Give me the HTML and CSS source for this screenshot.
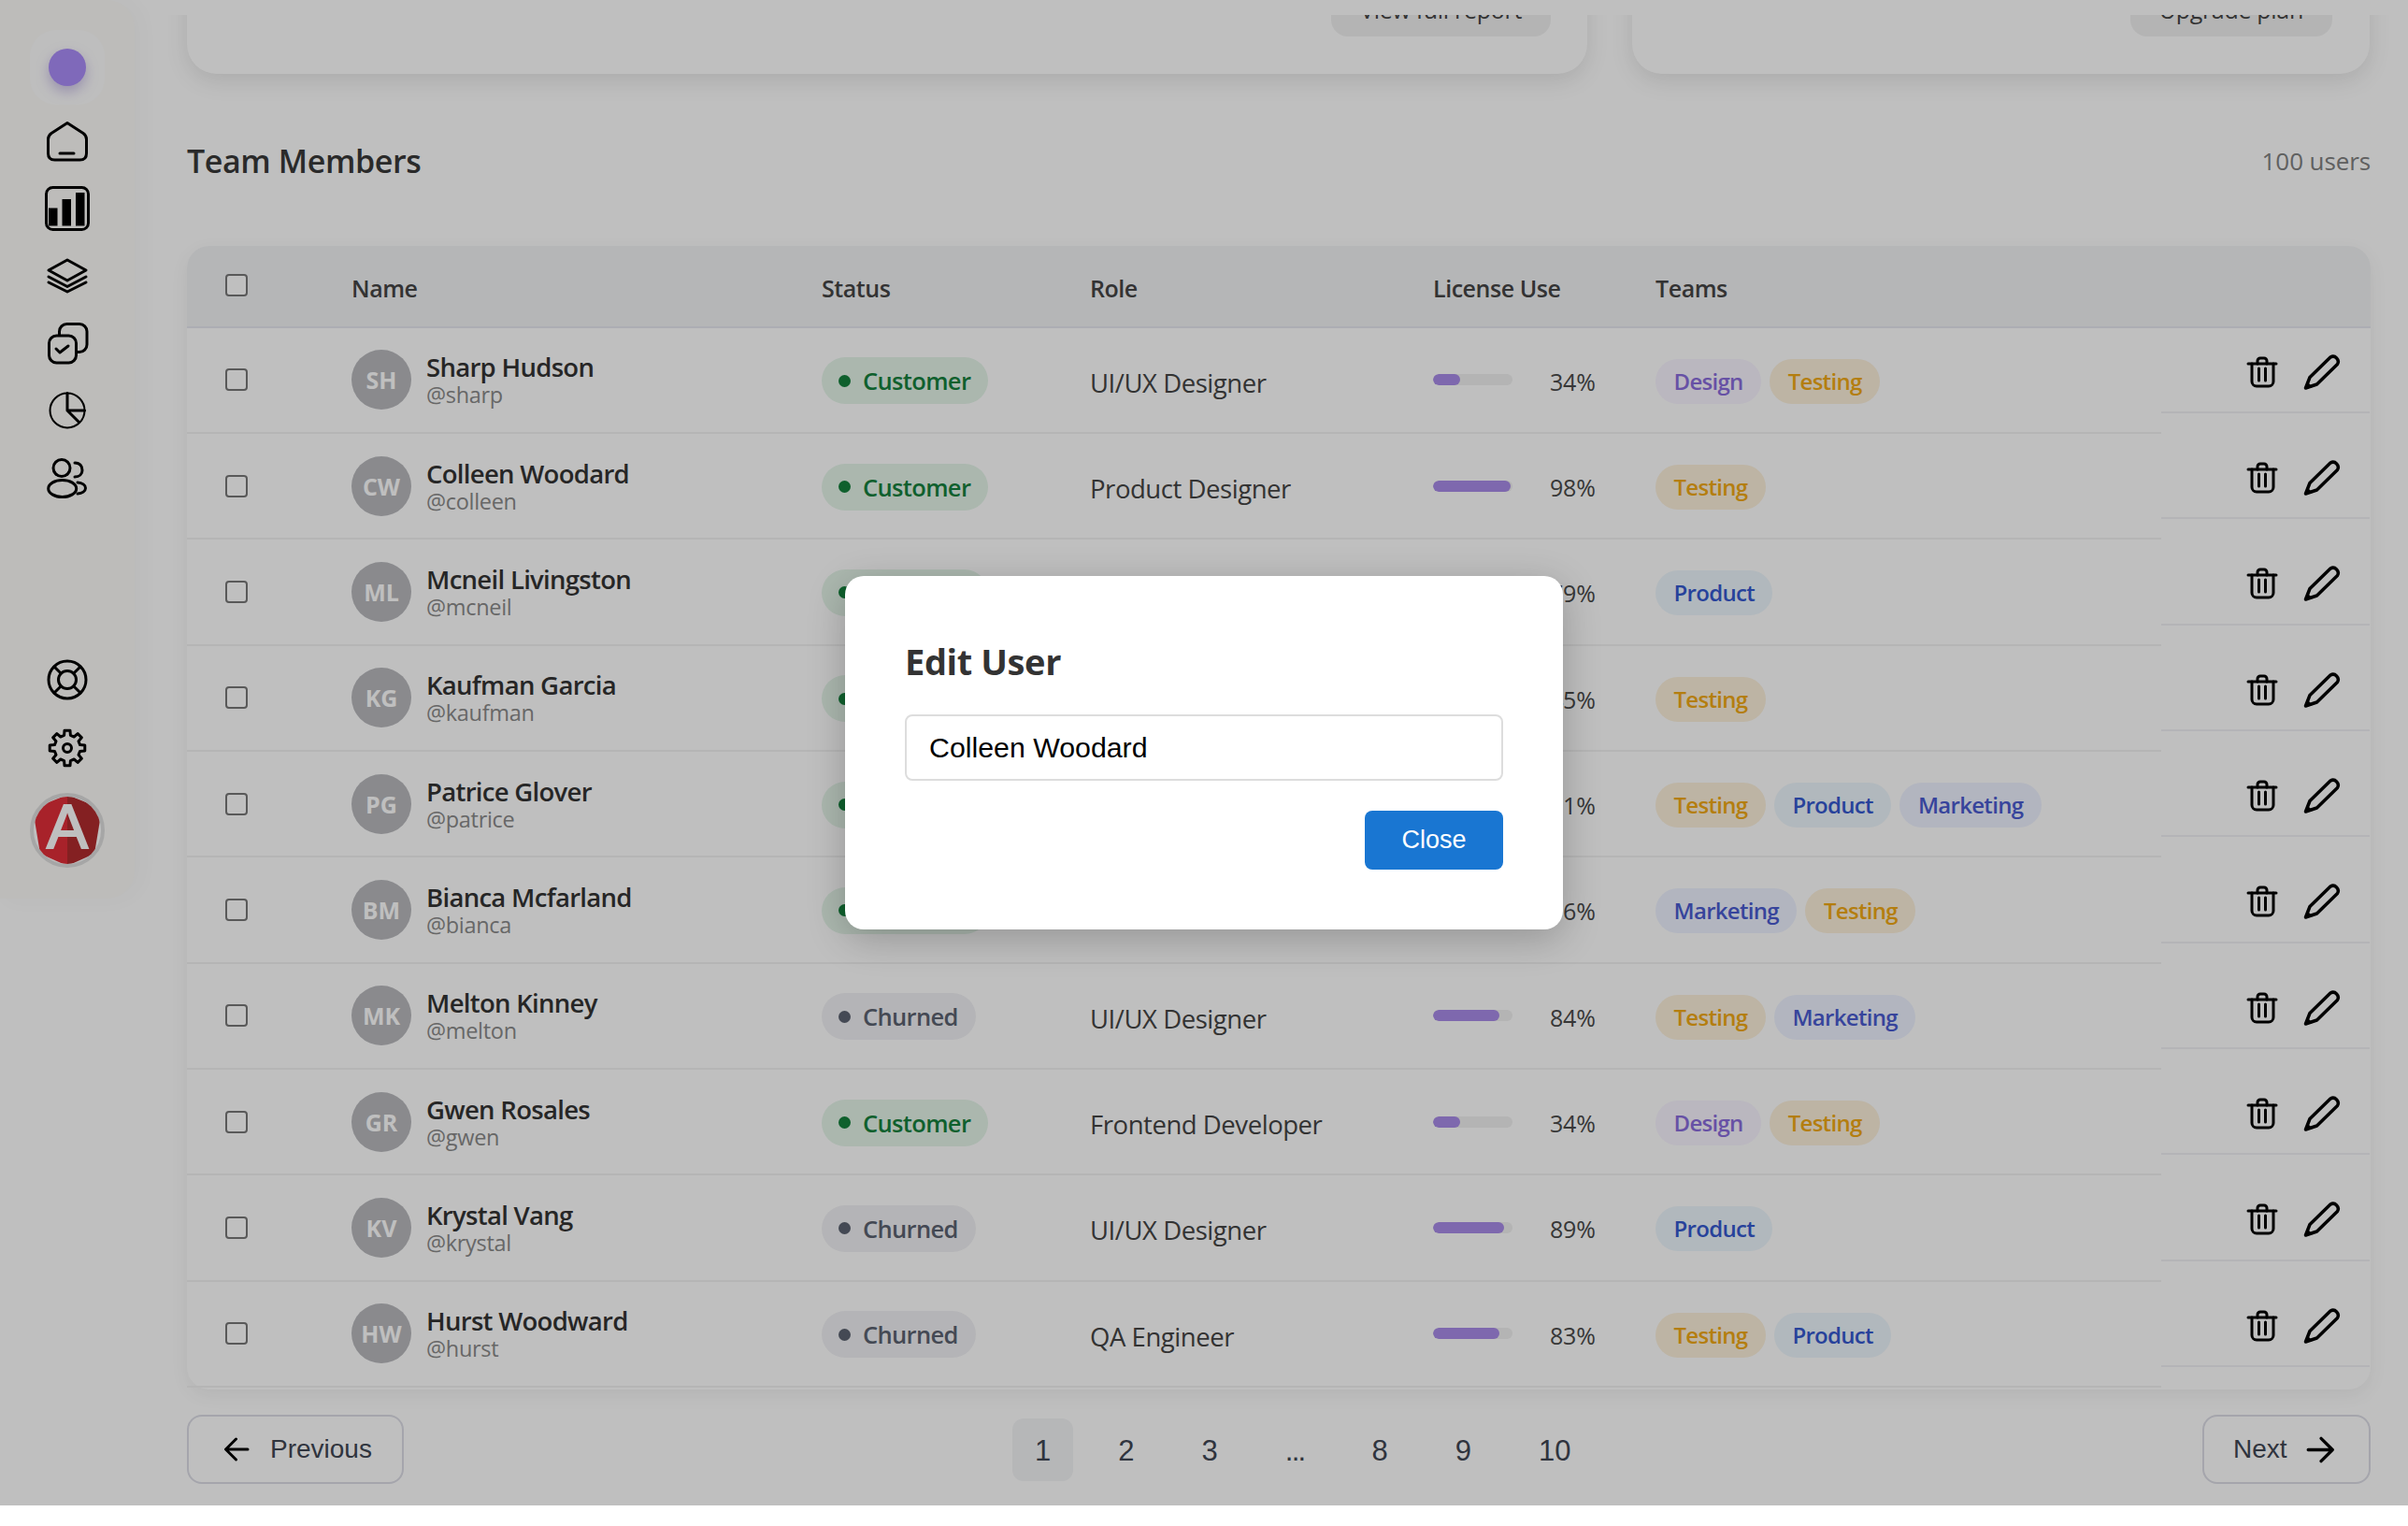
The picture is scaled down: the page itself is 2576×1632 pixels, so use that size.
FILE: index.html
```html
<!DOCTYPE html>
<html lang="en">
<head>
<meta charset="utf-8">
<title>Team Members</title>
<link rel="stylesheet" href="styles.css">
</head>
<body>
<svg class="defs" width="0" height="0" aria-hidden="true">
  <symbol id="trash" viewBox="0 0 36 36"><g class="ln"><path d="M3 9H33"/><path d="M13 9V6a3 3 0 0 1 3-3h4a3 3 0 0 1 3 3V9"/><path d="M7 9V28a5 5 0 0 0 5 5H25a5 5 0 0 0 5-5V9"/><path d="M14.500 14V27M21.500 14V27"/></g></symbol>
  <symbol id="pencil" viewBox="0 0 40 40"><g class="ln heavy"><path d="M2.500 37L7 25.500L29 4a5.500 5.500 0 0 1 7.500 7.500L14.500 33Z"/></g><path d="M2 38L4 30L10 36Z"/></symbol>
</svg>
<div class="app">
  <aside class="sidebar">
    <div class="brand"><span class="brand-dot"></span></div>
    <nav class="nav">
      <svg class="ico" viewBox="0 0 48 48"><g class="ln"><path d="M24 4.500L41 15.500Q44.500 18 44.500 22V37Q44.500 44 37.500 44H10.500Q3.500 44 3.500 37V22Q3.500 18 7 15.500Z"/><path d="M16 37H31"/></g></svg>
      <svg class="ico" viewBox="0 0 48 48"><rect class="ln" x="1.500" y="1.500" width="45" height="45" rx="7"/><rect x="4" y="23.500" width="9.500" height="19"/><rect x="18.500" y="14" width="9.500" height="28.500"/><rect x="33" y="7" width="9.500" height="35.500"/></svg>
      <svg class="ico" viewBox="0 0 48 48"><g class="ln"><path d="M24 7L44 18L24 29L4 18Z"/><path d="M4 25L24 35.500L44 25"/><path d="M4 31L24 41L44 31"/></g></svg>
      <svg class="ico" viewBox="0 0 48 48"><g class="ln"><path d="M15.500 15V11.500A8 8 0 0 1 23.500 3.500H37A8 8 0 0 1 45 11.500V25.500A8 8 0 0 1 37 33.500H33.500"/><rect x="4.500" y="16" width="29" height="29" rx="8"/><path d="M12 30L16 34L25 27"/></g></svg>
      <svg class="ico" viewBox="0 0 48 48"><g class="ln thin"><circle cx="24" cy="24" r="18.500"/></g><g class="ln"><path d="M24 5.500V24H42.500M24 24L36 36"/></g></svg>
      <svg class="ico" viewBox="0 0 48 48"><g class="ln"><circle cx="18" cy="13.500" r="9"/><ellipse cx="18.700" cy="35.500" rx="15" ry="9"/><path d="M32 8C38 8 40 12 40 16C40 20 37 23 32 23"/><path d="M35 29C40 29.500 43.500 32 43.500 35C43.500 38 40 40.500 35 41"/></g></svg>
    </nav>
    <div class="nav nav-bottom">
      <svg class="ico" viewBox="0 0 48 48"><g class="ln"><circle cx="24" cy="24" r="20"/><circle cx="24" cy="24" r="9.500"/><path d="M10 10L17.300 17.300M38 10L30.700 17.300M10 38L17.300 30.700M38 38L30.700 30.700"/></g></svg>
      <svg class="ico" viewBox="0 0 48 48"><g class="ln"><polygon points="20.610,10.420 21.030,5.230 26.970,5.230 27.390,10.420 31.210,12 35.170,8.630 39.370,12.830 36,16.790 37.580,20.610 42.770,21.030 42.770,26.970 37.580,27.390 36,31.210 39.370,35.170 35.170,39.370 31.210,36 27.390,37.580 26.970,42.770 21.030,42.770 20.610,37.580 16.790,36 12.830,39.370 8.630,35.170 12,31.210 10.420,27.390 5.230,26.970 5.230,21.030 10.420,20.610 12,16.790 8.630,12.830 12.830,8.630 16.790,12"/><circle cx="24" cy="24" r="4.500"/></g></svg>
    </div>
    <svg class="logo" viewBox="0 0 80 80">
      <defs><clipPath id="disc"><circle cx="40" cy="40" r="36"/></clipPath></defs>
      <circle class="logo-ring" cx="40" cy="40" r="38"/>
      <g clip-path="url(#disc)">
        <polygon class="logo-l" points="40,2 40,78 11,65 3,17"/>
        <polygon class="logo-r" points="40,2 40,78 69,65 77,17"/>
      </g>
      <text class="logo-a" x="40" y="59" text-anchor="middle">A</text>
    </svg>
  </aside>

  <main class="main">
    <section class="cards">
      <div class="card card-wide"><span class="card-btn">View full report</span></div>
      <div class="card card-narrow"><span class="card-btn">Upgrade plan</span></div>
    </section>

    <header class="section-head">
      <h2 class="section-title">Team Members</h2>
      <span class="section-count">100 users</span>
    </header>

    <section class="table">
      <div class="thead">
        <div class="cell-check"><input class="check" type="checkbox"></div>
        <div>Name</div><div>Status</div><div>Role</div><div>License Use</div><div>Teams</div>
      </div>
      <div class="tbody">
        <div class="rows">
          <div class="row"><div class="cell-check"><input class="check" type="checkbox"></div><div class="user"><span class="avatar">SH</span><div class="who"><span class="name">Sharp Hudson</span><span class="handle">@sharp</span></div></div><div><span class="status customer">Customer</span></div><div class="role">UI/UX Designer</div><div class="usage"><span class="track"><span class="fill" style="width:34%"></span></span><span class="pct">34%</span></div><div class="teams"><span class="pill design">Design</span><span class="pill testing">Testing</span></div></div>
          <div class="row"><div class="cell-check"><input class="check" type="checkbox"></div><div class="user"><span class="avatar">CW</span><div class="who"><span class="name">Colleen Woodard</span><span class="handle">@colleen</span></div></div><div><span class="status customer">Customer</span></div><div class="role">Product Designer</div><div class="usage"><span class="track"><span class="fill" style="width:98%"></span></span><span class="pct">98%</span></div><div class="teams"><span class="pill testing">Testing</span></div></div>
          <div class="row"><div class="cell-check"><input class="check" type="checkbox"></div><div class="user"><span class="avatar">ML</span><div class="who"><span class="name">Mcneil Livingston</span><span class="handle">@mcneil</span></div></div><div><span class="status customer">Customer</span></div><div class="role">Frontend Developer</div><div class="usage"><span class="track"><span class="fill" style="width:79%"></span></span><span class="pct">79%</span></div><div class="teams"><span class="pill product">Product</span></div></div>
          <div class="row"><div class="cell-check"><input class="check" type="checkbox"></div><div class="user"><span class="avatar">KG</span><div class="who"><span class="name">Kaufman Garcia</span><span class="handle">@kaufman</span></div></div><div><span class="status customer">Customer</span></div><div class="role">Backend Developer</div><div class="usage"><span class="track"><span class="fill" style="width:45%"></span></span><span class="pct">45%</span></div><div class="teams"><span class="pill testing">Testing</span></div></div>
          <div class="row"><div class="cell-check"><input class="check" type="checkbox"></div><div class="user"><span class="avatar">PG</span><div class="who"><span class="name">Patrice Glover</span><span class="handle">@patrice</span></div></div><div><span class="status customer">Customer</span></div><div class="role">Product Designer</div><div class="usage"><span class="track"><span class="fill" style="width:71%"></span></span><span class="pct">71%</span></div><div class="teams"><span class="pill testing">Testing</span><span class="pill product">Product</span><span class="pill marketing">Marketing</span></div></div>
          <div class="row"><div class="cell-check"><input class="check" type="checkbox"></div><div class="user"><span class="avatar">BM</span><div class="who"><span class="name">Bianca Mcfarland</span><span class="handle">@bianca</span></div></div><div><span class="status customer">Customer</span></div><div class="role">QA Engineer</div><div class="usage"><span class="track"><span class="fill" style="width:56%"></span></span><span class="pct">56%</span></div><div class="teams"><span class="pill marketing">Marketing</span><span class="pill testing">Testing</span></div></div>
          <div class="row"><div class="cell-check"><input class="check" type="checkbox"></div><div class="user"><span class="avatar">MK</span><div class="who"><span class="name">Melton Kinney</span><span class="handle">@melton</span></div></div><div><span class="status churned">Churned</span></div><div class="role">UI/UX Designer</div><div class="usage"><span class="track"><span class="fill" style="width:84%"></span></span><span class="pct">84%</span></div><div class="teams"><span class="pill testing">Testing</span><span class="pill marketing">Marketing</span></div></div>
          <div class="row"><div class="cell-check"><input class="check" type="checkbox"></div><div class="user"><span class="avatar">GR</span><div class="who"><span class="name">Gwen Rosales</span><span class="handle">@gwen</span></div></div><div><span class="status customer">Customer</span></div><div class="role">Frontend Developer</div><div class="usage"><span class="track"><span class="fill" style="width:34%"></span></span><span class="pct">34%</span></div><div class="teams"><span class="pill design">Design</span><span class="pill testing">Testing</span></div></div>
          <div class="row"><div class="cell-check"><input class="check" type="checkbox"></div><div class="user"><span class="avatar">KV</span><div class="who"><span class="name">Krystal Vang</span><span class="handle">@krystal</span></div></div><div><span class="status churned">Churned</span></div><div class="role">UI/UX Designer</div><div class="usage"><span class="track"><span class="fill" style="width:89%"></span></span><span class="pct">89%</span></div><div class="teams"><span class="pill product">Product</span></div></div>
          <div class="row"><div class="cell-check"><input class="check" type="checkbox"></div><div class="user"><span class="avatar">HW</span><div class="who"><span class="name">Hurst Woodward</span><span class="handle">@hurst</span></div></div><div><span class="status churned">Churned</span></div><div class="role">QA Engineer</div><div class="usage"><span class="track"><span class="fill" style="width:83%"></span></span><span class="pct">83%</span></div><div class="teams"><span class="pill testing">Testing</span><span class="pill product">Product</span></div></div>
        </div>
        <div class="actions">
          <div class="act"><svg class="act-trash"><use href="#trash"/></svg><svg class="act-pencil"><use href="#pencil"/></svg></div>
          <div class="act"><svg class="act-trash"><use href="#trash"/></svg><svg class="act-pencil"><use href="#pencil"/></svg></div>
          <div class="act"><svg class="act-trash"><use href="#trash"/></svg><svg class="act-pencil"><use href="#pencil"/></svg></div>
          <div class="act"><svg class="act-trash"><use href="#trash"/></svg><svg class="act-pencil"><use href="#pencil"/></svg></div>
          <div class="act"><svg class="act-trash"><use href="#trash"/></svg><svg class="act-pencil"><use href="#pencil"/></svg></div>
          <div class="act"><svg class="act-trash"><use href="#trash"/></svg><svg class="act-pencil"><use href="#pencil"/></svg></div>
          <div class="act"><svg class="act-trash"><use href="#trash"/></svg><svg class="act-pencil"><use href="#pencil"/></svg></div>
          <div class="act"><svg class="act-trash"><use href="#trash"/></svg><svg class="act-pencil"><use href="#pencil"/></svg></div>
          <div class="act"><svg class="act-trash"><use href="#trash"/></svg><svg class="act-pencil"><use href="#pencil"/></svg></div>
          <div class="act"><svg class="act-trash"><use href="#trash"/></svg><svg class="act-pencil"><use href="#pencil"/></svg></div>
        </div>
      </div>
    </section>

    <footer class="pager">
      <button class="page-btn prev" type="button"><svg class="arrow" viewBox="0 0 28 26"><path class="ln" d="M26 13H3M13.500 2L2.500 13L13.500 24"/></svg>Previous</button>
      <div class="pages"><span class="page current">1</span><span class="page">2</span><span class="page">3</span><span class="page dots">...</span><span class="page">8</span><span class="page">9</span><span class="page">10</span></div>
      <button class="page-btn next" type="button">Next<svg class="arrow arrow-next" viewBox="0 0 28 26"><path class="ln" d="M2 13H25M14.500 2L25.500 13L14.500 24"/></svg></button>
    </footer>
  </main>
</div>

<div class="overlay">
  <div class="modal">
    <h3 class="modal-title">Edit User</h3>
    <input class="modal-input" type="text" value="Colleen Woodard">
    <div class="modal-foot"><button class="modal-close" type="button">Close</button></div>
  </div>
</div>
</body>
</html>
```
FILE: styles.css
```css
* { box-sizing: border-box; }
html, body { margin: 0; padding: 0; background: #fff; }
body { position: relative; width: 2576px; height: 1632px; overflow: hidden; font-family: "Open Sans", "Noto Sans", sans-serif; color: #333; }
.defs { position: absolute; }

.ln { fill: none; stroke: #000; stroke-width: 3; stroke-linecap: round; stroke-linejoin: round; }
.thin { stroke-width: 2; }
.heavy { stroke-width: 3.5; }

.app { display: flex; align-items: flex-start; height: 1610px; background: #fff; }

/* Sidebar */
.sidebar { flex: none; width: 144px; height: 961px; display: flex; flex-direction: column; align-items: center; padding-top: 32px; background: #fcfbf8; border-radius: 0 30px 30px 0; box-shadow: 6px 0 24px rgba(0,0,0,.03); }
.brand { width: 80px; height: 80px; display: flex; align-items: center; justify-content: center; border-radius: 28px; background: #fefefe; }
.brand-dot { width: 40px; height: 40px; border-radius: 50%; background: #aa8cf9; box-shadow: 0 6px 14px rgba(110,80,190,.35); }
.nav { display: flex; flex-direction: column; align-items: center; gap: 24px; margin-top: 15px; }
.nav-bottom { margin-top: 168px; gap: 25px; }
.ico { display: block; width: 48px; height: 48px; }
.logo { display: block; width: 80px; height: 80px; margin-top: 24px; }
.logo-ring { fill: #fff; stroke: #dedede; stroke-width: 4; }
.logo-l { fill: #e02e38; }
.logo-r { fill: #b12b2e; }
.logo-a { font-family: "Liberation Sans", sans-serif; font-weight: 400; font-size: 66px; fill: #fff; stroke: #fff; stroke-width: 2; }

/* Main */
.main { flex: none; width: 2376px; height: 1594px; margin: 16px 0 0 36px; padding: 0 20px; overflow: hidden; }
.cards { display: flex; gap: 48px; height: 200px; margin-top: -137px; }
.card { display: flex; align-items: flex-end; justify-content: flex-end; padding: 0 40px 40px; background: #fff; border-radius: 32px; box-shadow: 0 8px 24px rgba(0,0,0,.1); }
.card-wide { width: 1498px; padding-right: 39px; }
.card-narrow { width: 789px; }
.card-btn { display: block; height: 60px; line-height: 63px; padding: 0 31px; font-size: 25px; font-weight: 500; color: #444; background: #f1f1f1; border-radius: 18px; letter-spacing: -.3px; }

.section-head { display: flex; align-items: center; justify-content: space-between; height: 48px; margin-top: 69px; margin-bottom: 67px; }
.section-title { margin: 0; font-size: 34px; font-weight: 600; color: #383838; letter-spacing: -.4px; }
.section-count { font-size: 26px; color: #808080; letter-spacing: -.1px; }

/* Table */
.table { height: 1223px; background: #fff; border-radius: 24px; box-shadow: 0 6px 20px rgba(0,0,0,.06); }
.thead, .row { display: grid; grid-template-columns: 176px 503px 287px 367px 238px 1fr; align-items: center; }
.thead { position: relative; z-index: 1; height: 87.500px; padding-top: 4px; font-size: 25px; font-weight: 600; color: #444; letter-spacing: -.45px; background: #f2f3f5; border-bottom: 2px solid #e6e7ef; border-radius: 24px 24px 0 0; }
.thead .cell-check { margin-top: -6px; }
.cell-check { padding-left: 41px; display: flex; }
.check { appearance: none; -webkit-appearance: none; display: block; width: 24px; height: 24px; margin: 0; background: #fff; border: 2px solid #777; border-radius: 4px; }

.tbody { display: flex; align-items: flex-start; }
.rows { flex: none; width: 2112px; }
.row { height: 113.350px; border-bottom: 2px solid #f2f2f2; }
.user { display: flex; align-items: center; gap: 16px; }
.avatar { flex: none; width: 64px; height: 64px; display: flex; align-items: center; justify-content: center; border-radius: 50%; background: #b8b9bd; color: #fff; font-size: 25px; font-weight: 700; }
.who { display: flex; flex-direction: column; }
.name { font-size: 27.500px; line-height: 32px; font-weight: 600; color: #333; letter-spacing: -.7px; }
.handle { font-size: 23.500px; line-height: 26px; color: #8a8a8a; letter-spacing: -.3px; }

.status { display: inline-flex; align-items: center; gap: 12px; height: 50px; margin-top: 2px; padding: 0 19px 0 18px; border-radius: 25px; font-size: 25.500px; font-weight: 600; letter-spacing: -.65px; line-height: 52px; vertical-align: middle; }
.status::before { content: ""; width: 13px; height: 13px; border-radius: 50%; background: currentColor; margin-right: 1px; }
.customer { color: #15803d; background: #e4f5e9; }
.churned { color: #5b6270; background: #f1f1f4; }

.role { font-size: 27.500px; color: #444; letter-spacing: -.45px; padding-top: 6px; }
.usage { display: flex; align-items: center; gap: 39px; }
.track { display: block; flex: none; width: 85px; height: 12px; background: #f0f0f0; border-radius: 6px; overflow: hidden; }
.fill { display: block; height: 100%; background: #a98be8; border-radius: 6px; }
.pct { font-size: 25px; color: #4a4a4a; letter-spacing: -.2px; padding-top: 3px; margin-left: 1px; }
.teams { display: flex; gap: 9px; padding-top: 3px; }
.pill { display: block; height: 48px; line-height: 47px; padding: 0 19.500px; border-radius: 24px; font-size: 24px; font-weight: 600; letter-spacing: -.7px; }
.design { color: #8a6cdc; background: #f8f4ff; }
.testing { color: #f0a814; background: #fcf0db; }
.product { color: #3558cf; background: #edf6fc; }
.marketing { color: #4a5bd0; background: #eef2ff; }

.actions { flex: none; width: 223px; margin-top: -22px; }
.act { display: flex; align-items: flex-start; height: 113.350px; padding: 51px 0 0 90px; gap: 26px; border-bottom: 2px solid #f0f0f5; }
.act-trash { display: block; width: 36px; height: 36px; }
.act-pencil { display: block; width: 40px; height: 40px; margin-top: -2px; }

/* Pager */
.pager { display: flex; align-items: center; margin-top: 27px; }
.page-btn { display: flex; align-items: center; gap: 22px; height: 74px; background: #fff; border: 2px solid #dcdde6; border-radius: 16px; font-family: "Liberation Sans", sans-serif; font-size: 28px; color: #3f4653; }
.prev { width: 232px; padding: 0 37px; }
.next { width: 180px; padding: 0 30px 0 31px; margin-left: auto; gap: 20px; }
.arrow { display: block; flex: none; width: 28px; height: 26px; }
.arrow-next { width: 31px; height: 29px; }
.pages { display: flex; gap: 24px; margin-left: 651px; }
.page { display: block; height: 67px; line-height: 70px; padding: 0 24px; border-radius: 12px; font-family: "Liberation Sans", sans-serif; font-size: 31px; color: #3f4653; }
.dots { letter-spacing: -1.700px; }
.current { background: #f3f4f6; }

/* Modal */
.overlay { position: absolute; z-index: 10; left: 0; top: 0; width: 2576px; height: 1610px; display: flex; align-items: center; justify-content: center; background: rgba(0,0,0,.25); }
.modal { width: 768px; height: 378px; padding: 60px 64px 0; background: #fff; border-radius: 20px; box-shadow: 0 10px 40px rgba(0,0,0,.22); }
.modal-title { margin: 0; height: 88px; font-size: 38px; line-height: 62px; font-weight: 700; color: #333; letter-spacing: -.4px; }
.modal-input { display: block; width: 640px; height: 71px; padding: 0 24px; background: #fff; border: 2px solid #ddd; border-radius: 8px; font-family: "Liberation Sans", sans-serif; font-size: 30.300px; color: #000; outline: none; }
.modal-foot { display: flex; justify-content: flex-end; margin-top: 32px; }
.modal-close { width: 148px; height: 63px; padding: 0; background: #1976d2; border: 0; border-radius: 8px; font-family: "Liberation Sans", sans-serif; font-size: 27px; color: #fff; }
```
